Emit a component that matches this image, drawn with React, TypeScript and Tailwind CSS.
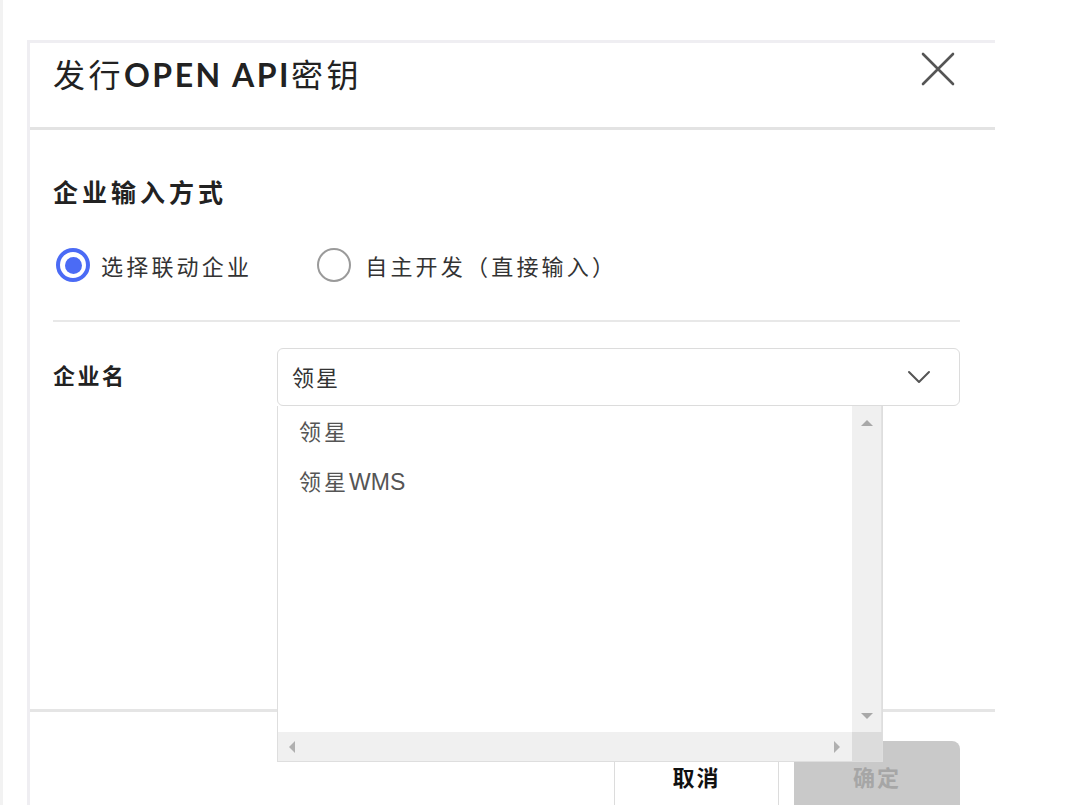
import React from "react";

const CJK = '"Noto Sans CJK SC", "Noto Sans", sans-serif';

function Radio({ checked, label, gap }: { checked: boolean; label: string; gap: string }) {
  return (
    <label className={`flex items-center ${gap}`}>
      {checked ? (
        <span className="w-[34px] h-[34px] rounded-full border-[4px] border-[#4b6bf5] flex items-center justify-center">
          <span className="w-[17px] h-[17px] rounded-full bg-[#4b6bf5]"></span>
        </span>
      ) : (
        <span className="w-[34px] h-[34px] rounded-full border-[2.5px] border-[#9a9a9a]"></span>
      )}
      <span className="text-[22px] tracking-[3.2px] text-[#333] leading-[36px]">{label}</span>
    </label>
  );
}

function Dropdown() {
  const items = ["领星", "领星WMS"];
  return (
    <div className="absolute left-0 top-full w-[606px] h-[356px] bg-white border border-t-0 border-[#dedede] flex flex-col z-10">
      <div className="flex flex-1 min-h-0">
        <ul className="flex-1 pt-[1px]">
          {items.map(it => (
            <li key={it} className="h-[50px] flex items-center pl-[21px] text-[22px] text-[#555]" style={{ fontFamily: '"Liberation Sans", "Noto Sans CJK SC", sans-serif' }}>
              <span className="tracking-[3px]">{it.slice(0, 2)}</span>
              <span className="text-[23px]">{it.slice(2)}</span>
            </li>
          ))}
        </ul>
        <div className="w-[30px] bg-[#f0f0f0] border-r border-[#e2e2e2] flex flex-col items-center justify-between pt-[14px] pb-[13px]">
          <span className="w-0 h-0 border-l-[6px] border-r-[6px] border-b-[6px] border-l-transparent border-r-transparent border-b-[#a8a8a8]"></span>
          <span className="w-0 h-0 border-l-[6px] border-r-[6px] border-t-[6px] border-l-transparent border-r-transparent border-t-[#a8a8a8]"></span>
        </div>
      </div>
      <div className="h-[29px] flex">
        <div className="flex-1 bg-[#f0f0f0] flex items-center justify-between pl-[11px] pr-[12px]">
          <span className="w-0 h-0 border-t-[6px] border-b-[6px] border-r-[6px] border-t-transparent border-b-transparent border-r-[#b0b0b0]"></span>
          <span className="w-0 h-0 border-t-[6px] border-b-[6px] border-l-[6px] border-t-transparent border-b-transparent border-l-[#b0b0b0]"></span>
        </div>
        <div className="w-[30px] bg-[#dcdcdc]"></div>
      </div>
    </div>
  );
}

export default function App() {
  return (
    <div className="h-[805px] overflow-hidden bg-white border-l-[3px] border-[#f2f2f2] pt-[40px] pl-[24px]" style={{ fontFamily: CJK }}>
      <div className="w-[968px] border-t-[3px] border-l-[3px] border-[#efeef2]">
        {/* header */}
        <div className="h-[87px] border-b-[3px] border-[#e3e3e3] flex justify-between items-start pl-[23px] pr-[40px]">
          <h1 className="mt-[10px] text-[32px] leading-[40px] tracking-[3.5px] text-[#222]">
            发行<span className="font-bold tracking-[2.5px]" style={{ fontFamily: 'Lato, "Noto Sans", sans-serif' }}>OPEN API</span>密钥
          </h1>
          <button className="mt-[9px] w-[34px] h-[34px] text-[#555]">
            <svg viewBox="0 0 34 34" width="34" height="34" fill="none" stroke="currentColor" strokeWidth="2.6" strokeLinecap="round">
              <path d="M2 2 L32 32 M32 2 L2 32" />
            </svg>
          </button>
        </div>

        {/* body */}
        <div className="h-[579px] pl-[23px] pr-[35px]">
          <h2 className="pt-[43px] text-[25px] leading-[36px] tracking-[4px] font-bold text-[#222]">企业输入方式</h2>
          <div className="mt-[38px] h-[36px] flex items-center gap-[65px] pl-[3px]">
            <Radio checked label="选择联动企业" gap="gap-[11px]" />
            <Radio checked={false} label="自主开发（直接输入）" gap="gap-[14px]" />
          </div>
          <div className="mt-[37px] h-[2px] bg-[#e8e8e8]"></div>
          <div className="mt-[26px] flex items-center">
            <div className="w-[224px] pb-[6px] text-[22px] tracking-[2.5px] font-bold text-[#222]">企业名</div>
            <div className="relative flex-1">
              <div className="h-[58px] border-[1.5px] border-[#dcdcdc] rounded-[6px] flex items-center justify-between pl-[14px] pr-[28px]">
                <span className="text-[22px] tracking-[2px] text-[#333] pb-[2px]">领星</span>
                <svg width="24" height="14" viewBox="0 0 24 14" fill="none" stroke="#555" strokeWidth="2" strokeLinecap="round" strokeLinejoin="round">
                  <path d="M2 2 L12 12 L22 2" />
                </svg>
              </div>
              <Dropdown />
            </div>
          </div>
        </div>

        {/* footer */}
        <div className="border-t-[3px] border-[#e5e5e5] pt-[29px] pr-[35px] flex justify-end gap-[15px]">
          <button className="w-[165px] h-[70px] border border-[#dcdcdc] bg-white text-[22px] font-bold text-[#111] tracking-[2px]">取消</button>
          <button className="w-[166px] h-[70px] rounded-t-[8px] bg-[#c9c9c9] text-[22px] font-bold text-[#a6a6a6] tracking-[2px]">确定</button>
        </div>
      </div>
    </div>
  );
}
